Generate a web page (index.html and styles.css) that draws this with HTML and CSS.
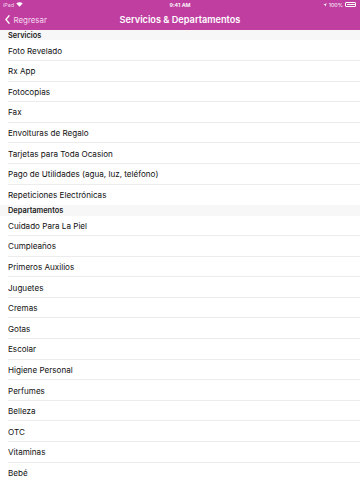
FILE: index.html
```html
<!DOCTYPE html>
<html lang="es">
<head>
<meta charset="utf-8">
<title>Servicios &amp; Departamentos</title>
<link rel="stylesheet" href="styles.css">
</head>
<body>
<div class="topbar">
  <div class="status">
    <div class="st-left">iPad
      <svg class="wifi" viewBox="0 0 12 9" width="7" height="5"><path d="M6 8.6 L0.3 2.6 A8.2 8.2 0 0 1 11.7 2.6 Z" fill="#fff"/></svg>
    </div>
    <div class="st-center">9:41 AM</div>
    <div class="st-right">
      <svg class="loc" viewBox="0 0 10 10" width="4" height="4"><path d="M9.5 0.5 L0.5 4.5 L5 5 L5.5 9.5 Z" fill="#fff"/></svg>
      <span>100%</span>
      <span class="battery"><span class="batt-fill"></span></span>
    </div>
  </div>
  <div class="nav">
    <div class="back">
      <svg class="chev" viewBox="0 0 8 14" width="5" height="9"><path d="M6.5 1 L1.5 7 L6.5 13" fill="none" stroke="#fff" stroke-width="2" stroke-linecap="round" stroke-linejoin="round"/></svg>
      <span>Regresar</span>
    </div>
    <div class="title">Servicios &amp; Departamentos</div>
  </div>
</div>
<div class="list">
  <div class="section">Servicios</div>
  <div class="row">Foto Revelado</div>
  <div class="row">Rx App</div>
  <div class="row">Fotocopias</div>
  <div class="row">Fax</div>
  <div class="row">Envolturas de Regalo</div>
  <div class="row">Tarjetas para Toda Ocasion</div>
  <div class="row">Pago de Utilidades (agua, luz, teléfono)</div>
  <div class="row last">Repeticiones Electrónicas</div>
  <div class="section">Departamentos</div>
  <div class="row">Cuidado Para La Piel</div>
  <div class="row">Cumpleaños</div>
  <div class="row">Primeros Auxilios</div>
  <div class="row">Juguetes</div>
  <div class="row">Cremas</div>
  <div class="row">Gotas</div>
  <div class="row">Escolar</div>
  <div class="row">Higiene Personal</div>
  <div class="row">Perfumes</div>
  <div class="row">Belleza</div>
  <div class="row">OTC</div>
  <div class="row">Vitaminas</div>
  <div class="row">Bebé</div>
</div>
</body>
</html>
```
FILE: styles.css
```css
* { box-sizing: border-box; }
html, body { margin: 0; padding: 0; }
body {
  width: 360px;
  height: 480px;
  overflow: hidden;
  background: #fff;
  font-family: Inter, "Liberation Sans", Arial, sans-serif;
  color: #000;
}
.topbar {
  background: #c03ea0;
  color: #fff;
}
.status {
  height: 9.4px;
  display: flex;
  align-items: center;
  justify-content: space-between;
  padding: 0 4px 0 3px;
  font-size: 5.4px;
  position: relative;
}
.st-left { display: flex; align-items: center; gap: 2px; color: #f3d6ec; }
.st-center {
  position: absolute;
  left: 0; right: 0;
  text-align: center;
  font-weight: 600;
}
.st-right { display: flex; align-items: center; gap: 2px; }
.battery {
  width: 11px;
  height: 4.5px;
  border: 0.6px solid #fff;
  border-radius: 1px;
  padding: 0.5px;
  display: flex;
}
.batt-fill { flex: 1; background: #fff; border-radius: 0.5px; }
.nav {
  height: 20.6px;
  display: flex;
  align-items: center;
  position: relative;
  padding-left: 5px;
}
.back {
  display: flex;
  align-items: center;
  gap: 3.5px;
  font-size: 7.9px;
  color: #f6dcef;
}
.chev { display: block; }
.title {
  position: absolute;
  left: 0; right: 0;
  text-align: center;
  font-weight: 600;
  font-size: 9.2px;
}
.section {
  height: 10.4px;
  background: #f7f7f7;
  font-size: 7.4px;
  font-weight: 600;
  color: #222;
  padding-left: 8px;
  display: flex;
  align-items: center;
}
.row {
  height: 20.6px;
  font-size: 8.1px;
  color: #111;
  padding-left: 8px;
  display: flex;
  align-items: center;
  position: relative;
}
.row::after {
  content: "";
  position: absolute;
  left: 8px;
  right: 0;
  bottom: 0;
  height: 1px;
  background: #ececec;
}
.row.last::after { display: none; }
```
